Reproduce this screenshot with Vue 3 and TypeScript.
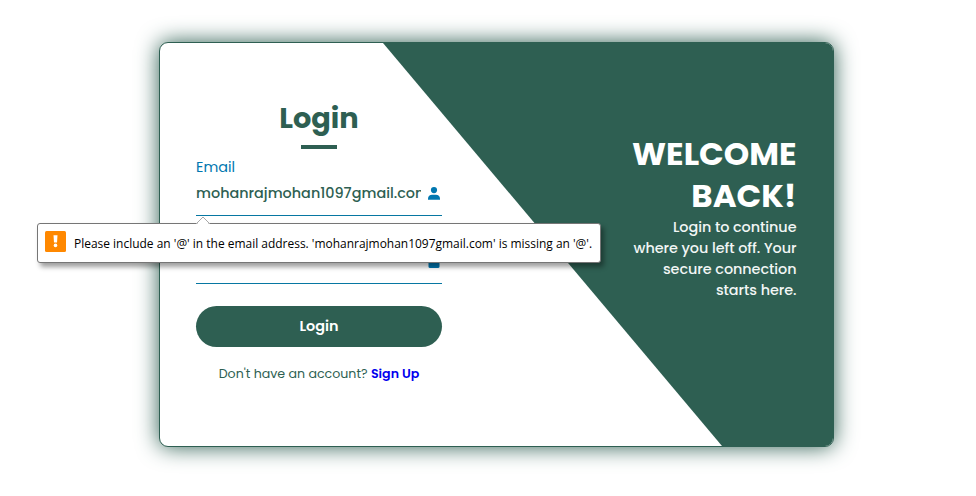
<script setup lang="ts">
import { ref } from 'vue'

const email = ref('mohanrajmohan1097gmail.com')
const password = ref('')
const welcomeLines: string[] = ['WELCOME', 'BACK!']
const introLines: string[] = ['Login to continue', 'where you left off. Your', 'secure connection', 'starts here.']
</script>

<template>
  <main class="page">
    <section class="card">
      <form class="form" novalidate @submit.prevent>
        <h1 class="title">Login</h1>
        <div class="rule"></div>
        <label class="label" for="email">Email</label>
        <div class="field">
          <input id="email" v-model="email" class="input" type="text" spellcheck="false" />
          <svg class="icon" viewBox="0 0 12 13" aria-hidden="true">
            <circle cx="6" cy="3.1" r="3.1" />
            <path d="M0 12.8V11.6C0 9.2 1.8 7.7 4 7.7H8C10.2 7.7 12 9.2 12 11.6V12.8Z" />
          </svg>
        </div>
        <div class="field second">
          <input v-model="password" class="input" type="password" aria-label="Password" />
          <svg class="icon" viewBox="0 0 12 13" aria-hidden="true">
            <path d="M1.7 5H2.5V3.5A3.5 3.5 0 0 1 9.5 3.5V5H10.3C11 5 11.5 5.5 11.5 6.2V11.8C11.5 12.5 11 13 10.3 13H1.7C1 13 .5 12.5 .5 11.8V6.2C.5 5.5 1 5 1.7 5ZM4 5H8V3.5A2 2 0 0 0 4 3.5Z" />
          </svg>
        </div>
        <button class="submit" type="submit">Login</button>
        <p class="signup">Don't have an account? <a class="link" href="#">Sign Up</a></p>
      </form>
      <aside class="welcome">
        <h2 class="heading">
          <span v-for="line in welcomeLines" :key="line">{{ line }}</span>
        </h2>
        <p class="intro">
          <span v-for="line in introLines" :key="line">{{ line }}</span>
        </p>
      </aside>
    </section>

    <div class="tooltip" role="alert">
      <svg class="arrow" viewBox="0 0 16 9" aria-hidden="true">
        <path class="arrow-fill" d="M1 9L8 1.3L15 9Z" />
        <path class="arrow-line" d="M1 8L8 1L15 8" />
      </svg>
      <svg class="warn" viewBox="0 0 21 21" aria-hidden="true">
        <rect width="21" height="21" rx="1.5" fill="#ff8800" />
        <path d="M8.5 4.2H12.5L12 11.4H9Z" fill="#fff" />
        <circle cx="10.5" cy="14.4" r="1.8" fill="#fff" />
      </svg>
      <span class="message">Please include an '@' in the email address. 'mohanrajmohan1097gmail.com' is missing an '@'.</span>
    </div>
  </main>
</template>

<style>
body {
  margin: 0;
  background: #fff;
}
</style>

<style scoped>
.page {
  position: relative;
  box-sizing: border-box;
  height: 496px;
  padding: 42px 0 0 159px;
  overflow: hidden;
  font-family: Poppins, Inter, sans-serif;
  color: #2e5f52;
}
.card {
  box-sizing: border-box;
  display: flex;
  justify-content: space-between;
  width: 675px;
  height: 405px;
  border: 1px solid #2e5f52;
  border-radius: 9px;
  background: #fff;
  box-shadow: 0 0 22.5px #2e5f52;
  overflow: hidden;
}
.form {
  flex: none;
  display: flex;
  flex-direction: column;
  width: 246px;
  padding: 51px 0 0 36px;
}
.title {
  margin: 0;
  height: 51px;
  line-height: 49px;
  font-size: 28.8px;
  font-weight: 700;
  text-align: center;
  white-space: nowrap;
}
.rule {
  width: 36px;
  height: 4px;
  margin: 0 auto;
  background: #2e5f52;
}
.label {
  height: 22px;
  margin-top: 7px;
  line-height: 22px;
  font-size: 14.4px;
  color: #0077b0;
}
.field {
  box-sizing: border-box;
  display: flex;
  justify-content: space-between;
  height: 38px;
  border-bottom: 1px solid #0777a2;
}
.second {
  margin-top: 30px;
}
.input {
  box-sizing: border-box;
  width: 225px;
  height: 30px;
  padding: 0;
  border: 0;
  outline: 0;
  background: transparent;
  font: 500 14.4px Poppins, Inter, sans-serif;
  color: #2e5f52;
}
.icon {
  width: 12px;
  height: 13px;
  margin: 9px 2px 0 0;
  fill: #0077b0;
}
.submit {
  height: 41px;
  margin-top: 22px;
  padding: 0;
  border: 0;
  border-radius: 21px;
  background: #2e5f52;
  color: #fff;
  font: 600 14.4px Poppins, Inter, sans-serif;
}
.signup {
  margin: 17px 0 0;
  line-height: 20px;
  font-size: 12.6px;
  text-align: center;
  white-space: nowrap;
}
.link {
  color: #0000ee;
  font-weight: 600;
  text-decoration: none;
}
.welcome {
  flex: none;
  box-sizing: border-box;
  width: 450px;
  height: 403px;
  margin-left: -59px;
  padding: 90px 36.5px 0 0;
  background: #2e5f52;
  clip-path: polygon(0 0, 100% 0, 100% 100%, 339px 100%);
  color: #fff;
  text-align: right;
}
.heading,
.intro {
  display: flex;
  flex-direction: column;
  align-items: flex-end;
  margin: 0;
  white-space: nowrap;
}
.heading {
  line-height: 42px;
  font-size: 32.4px;
  font-weight: 700;
}
.intro {
  line-height: 21px;
  font-size: 14.4px;
  font-weight: 500;
  letter-spacing: -0.05px;
  color: #f2f6f5;
}
.tooltip {
  position: absolute;
  left: 37px;
  top: 223px;
  box-sizing: border-box;
  display: flex;
  align-items: center;
  width: 564px;
  height: 40px;
  padding-left: 7px;
  border: 1px solid #767676;
  border-radius: 3px;
  background: #fff;
  box-shadow: 3px 4px 5px rgba(0, 0, 0, 0.38);
}
.arrow {
  position: absolute;
  left: 157px;
  top: -8px;
  width: 16px;
  height: 9px;
}
.arrow-fill {
  fill: #fff;
}
.arrow-line {
  fill: none;
  stroke: #a8a8a8;
}
.warn {
  flex: none;
  width: 21px;
  height: 21px;
  margin-top: -3px;
}
.message {
  margin-left: 8px;
  font: 13px "Segoe UI", "Open Sans", sans-serif;
  transform: scaleX(0.92);
  transform-origin: left center;
  color: #000;
  white-space: nowrap;
}
</style>
